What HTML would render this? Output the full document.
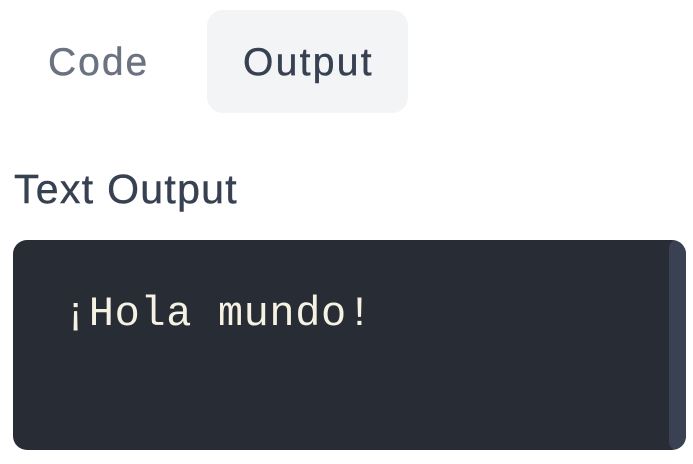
<!DOCTYPE html>
<html><head><style>
body{margin:0;width:693px;height:464px;background:#fff;position:relative;overflow:hidden;font-family:"Liberation Sans",sans-serif}
.t{position:absolute;white-space:nowrap}
.tab{position:absolute;left:207px;top:10px;width:201px;height:103px;background:#f3f4f6;border-radius:16px}
.box{position:absolute;left:13px;top:240px;width:673px;height:210px;background:#282c35;border-radius:14px;overflow:hidden}
.sb{position:absolute;right:0;top:0;width:17px;height:100%;background:#394152;border-radius:8px}
</style></head><body>
<div class="tab"></div>
<div class="t" style="left:48px;top:39px;font-size:39px;line-height:48px;color:#6b7280;letter-spacing:2px;-webkit-text-stroke:0.4px #6b7280">Code</div>
<div class="t" style="left:243px;top:39px;font-size:39px;line-height:48px;color:#374151;letter-spacing:2.3px;-webkit-text-stroke:0.4px #374151">Output</div>
<div class="t" style="left:14px;top:165px;font-size:41px;line-height:48px;color:#374151;letter-spacing:1.3px;-webkit-text-stroke:0.4px #374151">Text Output</div>
<div class="box"><div class="sb"></div>
<div class="t" style="left:50px;top:49px;font-family:'Liberation Mono',monospace;font-size:42px;line-height:50px;letter-spacing:0.6px;color:#f5f1e3">¡Hola mundo!</div>
</div>
</body></html>
